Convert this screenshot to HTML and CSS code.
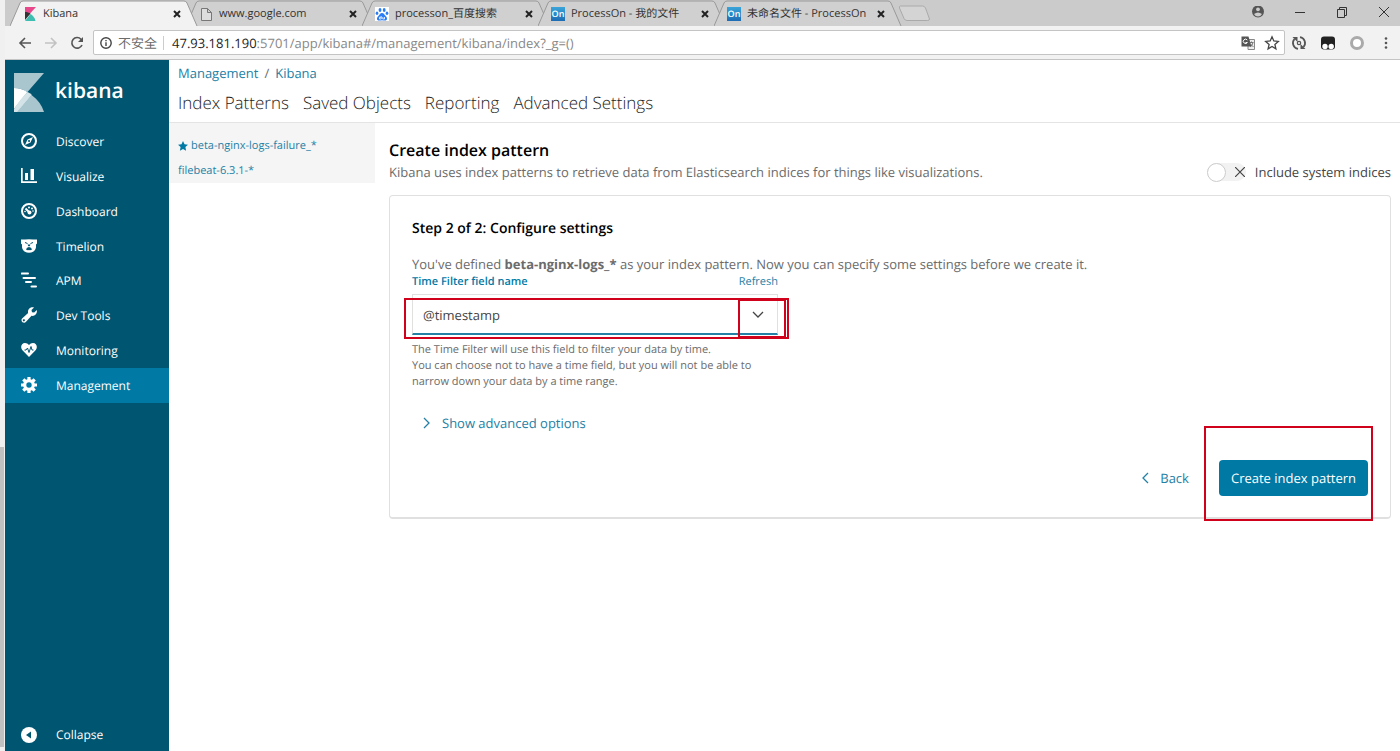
FILE: index.html
```html
<!DOCTYPE html>
<html lang="en">
<head>
<meta charset="utf-8">
<title>Kibana</title>
<link rel="stylesheet" href="styles.css">
</head>
<body>
<div class="edge"><div class="edge-bar"></div></div>
<div class="browser">
  <header class="titlebar">
    <div class="tabs">
      <div class="tab active">
        <svg class="tab-shape" viewBox="0 0 188 26" preserveAspectRatio="none"><path d="M0 26L10 3Q11 1 13 1H174Q176 1 177 3L187 26"/></svg>
        <svg class="favicon" viewBox="0 0 16 16"><path fill="#e8488b" d="M3 1h11L3 13z"/><path fill="#333" d="M3 6c2 0 4 .6 5.500 1.500L3 14z"/><path fill="#3ebeb0" d="M8.500 8C11 9.500 13 12 13.500 15H3z"/></svg>
        <span class="tab-title">Kibana</span>
        <button class="close" aria-label="Close tab"><svg viewBox="0 0 8 8"><path d="M1 1l6 6M7 1L1 7"/></svg></button>
      </div>
      <div class="tab">
        <svg class="tab-shape" viewBox="0 0 188 26" preserveAspectRatio="none"><path d="M0 26L10 3Q11 1 13 1H174Q176 1 177 3L187 26"/></svg>
        <svg class="favicon" viewBox="0 0 16 16"><path fill="#ddd" stroke="#777" d="M3.500 2.500h6l4 4v8h-10zM9.500 2.500v4h4"/></svg>
        <span class="tab-title">www.google.com</span>
        <button class="close" aria-label="Close tab"><svg viewBox="0 0 8 8"><path d="M1 1l6 6M7 1L1 7"/></svg></button>
      </div>
      <div class="tab">
        <svg class="tab-shape" viewBox="0 0 188 26" preserveAspectRatio="none"><path d="M0 26L10 3Q11 1 13 1H174Q176 1 177 3L187 26"/></svg>
        <svg class="favicon" viewBox="0 0 16 16"><path fill="#fff" d="M1 1h14v14H1z"/><g fill="#2b7df5"><ellipse cx="6" cy="4" rx="1.400" ry="2"/><ellipse cx="10.200" cy="4" rx="1.400" ry="2"/><ellipse cx="3" cy="7.300" rx="1.300" ry="1.800"/><ellipse cx="13" cy="7.300" rx="1.300" ry="1.800"/><path d="M8 7c2 0 2.500 2 4 3.500s1.500 4-1 4c-1 0-2-.3-3-.3s-2 .3-3 .3c-2.500 0-2.500-2.500-1-4S6 7 8 7z"/></g><path fill="none" stroke="#fff" stroke-width=".8" d="M7.200 10v3H5.500v-1.700h1.700M8.800 11v2h1.700v-2"/></svg>
        <span class="tab-title">processon_百度搜索</span>
        <button class="close" aria-label="Close tab"><svg viewBox="0 0 8 8"><path d="M1 1l6 6M7 1L1 7"/></svg></button>
      </div>
      <div class="tab">
        <svg class="tab-shape" viewBox="0 0 188 26" preserveAspectRatio="none"><path d="M0 26L10 3Q11 1 13 1H174Q176 1 177 3L187 26"/></svg>
        <span class="favicon on">On</span>
        <span class="tab-title">ProcessOn - 我的文件</span>
        <button class="close" aria-label="Close tab"><svg viewBox="0 0 8 8"><path d="M1 1l6 6M7 1L1 7"/></svg></button>
      </div>
      <div class="tab">
        <svg class="tab-shape" viewBox="0 0 188 26" preserveAspectRatio="none"><path d="M0 26L10 3Q11 1 13 1H174Q176 1 177 3L187 26"/></svg>
        <span class="favicon on">On</span>
        <span class="tab-title">未命名文件 - ProcessOn</span>
        <button class="close" aria-label="Close tab"><svg viewBox="0 0 8 8"><path d="M1 1l6 6M7 1L1 7"/></svg></button>
      </div>
      <button class="new-tab" aria-label="New tab"><svg viewBox="0 0 32 17"><path d="M2.500 1h22q2 0 3 2l4 11q0 1.500-2 1.500H9q-2 0-3-2L1.500 3q-.5-2 1-2z"/></svg></button>
    </div>
    <div class="window-buttons">
      <button aria-label="Profile"><svg viewBox="0 0 14 14"><circle cx="7" cy="5.500" r="6" fill="#555"/><circle cx="7" cy="3.300" r="1.900" fill="#ccc"/><path fill="#ccc" d="M3 8q4-3 8 0-1.500 2.500-4 2.500T3 8z"/></svg></button>
      <button aria-label="Minimize"><svg viewBox="0 0 14 14"><path d="M2 6.500h10"/></svg></button>
      <button aria-label="Restore"><svg viewBox="0 0 14 14"><path d="M2.500 3.500h7v8h-7zM4.500 3.500v-2h7v8h-2"/></svg></button>
      <button aria-label="Close"><svg viewBox="0 0 14 14"><path d="M2 1l10 10M12 1L2 11"/></svg></button>
    </div>
  </header>
  <div class="toolbar">
    <div class="tools">
      <button aria-label="Back"><svg viewBox="0 0 16 16"><path d="M14 8H3M8 3L3 8l5 5"/></svg></button>
      <button class="faded" aria-label="Forward"><svg viewBox="0 0 16 16"><path d="M2 8h11M8 3l5 5-5 5"/></svg></button>
      <button aria-label="Reload"><svg viewBox="0 0 16 16"><path d="M13 10A5.300 5.300 0 1 1 12 4.200L13.300 6"/><path fill="#555" stroke="none" d="M14 2v5H9z"/></svg></button>
    </div>
    <div class="omnibox">
      <svg class="info" viewBox="0 0 14 14"><circle cx="7" cy="7" r="5.200"/><path d="M7 6.300V10M7 4v1.200"/></svg>
      <span class="insecure">不安全</span>
      <span class="url"><b>47.93.181.190</b>:5701/app/kibana#/management/kibana/index?_g=()</span>
      <svg class="box-icon" viewBox="0 0 16 16"><path fill="#eee" stroke="#888" d="M8 4.500h6.500v10H8z"/><path fill="#555" d="M1.500 1.500h7l3 10h-10z"/><path fill="none" stroke="#fff" d="M7.300 5A2.200 2.200 0 1 0 7.400 7.500H5.500"/><path fill="none" stroke="#777" d="M9.500 7.500h4M11.500 6.500v1M13 7.500q-.5 3-3 4.500M10.500 9l3 3"/></svg>
      <svg class="box-icon" viewBox="0 0 16 16"><path fill="none" stroke="#444" stroke-width="1.300" d="M8 1.800l1.800 4.200 4.500.4-3.400 3 1 4.400L8 11.500l-3.900 2.300 1-4.400-3.400-3L6.200 6z"/></svg>
    </div>
    <div class="extensions">
      <svg viewBox="0 0 16 16"><g fill="none" stroke="#555" stroke-width="1.800"><path d="M9 2.100A6 6 0 0 1 12.500 12M7 13.900A6 6 0 0 1 3.500 4"/><circle cx="8" cy="8" r="1.700" stroke-width="1.200"/></g><path fill="#555" d="M1.500 2h5v5zM14.500 14h-5V9z"/></svg>
      <svg viewBox="0 0 16 16"><rect x="1" y="1.500" width="14" height="13" rx="3" fill="#222"/><circle cx="5" cy="11.500" r="2.700" fill="#fff"/><circle cx="11.200" cy="11.500" r="2.700" fill="#fff"/></svg>
      <svg viewBox="0 0 16 16"><circle cx="8" cy="8" r="5.500" fill="#fff" stroke="#aaa" stroke-width="3"/></svg>
      <svg viewBox="0 0 16 16"><g fill="#555"><circle cx="8" cy="3.500" r="1.300"/><circle cx="8" cy="8" r="1.300"/><circle cx="8" cy="12.500" r="1.300"/></g></svg>
    </div>
  </div>
  <div class="app">
    <nav class="sidebar">
      <a class="brand" href="#">
        <svg viewBox="0 0 30 39"><path fill="#a9c6cf" d="M0 0h30L13.500 19Q7 15 0 15z"/><path fill="#fff" d="M0 15q7 0 13.500 4L0 36z"/><path fill="#d3e3e8" d="M13.500 19Q7 25 0 36v3h4L18 22q-2-2-4.500-3z"/><path fill="#a9c6cf" d="M17.500 22Q27 29 30 39H3z"/></svg>
        <span>kibana</span>
      </a>
      <ul class="menu">
        <li><a href="#"><svg viewBox="0 0 16 16"><circle cx="8" cy="8" r="7" fill="none" stroke="#fff" stroke-width="2"/><path fill="#fff" fill-rule="evenodd" d="M12 4L9.500 9.500 4 12l2.500-5.500zM8 7a1 1 0 1 0 .1 0z"/></svg>Discover</a></li>
        <li><a href="#"><svg viewBox="0 0 16 16"><path fill="#fff" d="M0 0h1.700v13.300H16V15H0zM4 5h3v7H4zM9.500 1h3.500v11H9.500z"/></svg>Visualize</a></li>
        <li><a href="#"><svg viewBox="0 0 16 16"><circle cx="8" cy="8" r="7" fill="none" stroke="#fff" stroke-width="2"/><path stroke="#fff" stroke-width="2" d="M4.500 5.500l4 4"/><g fill="#fff"><circle cx="8.500" cy="9.500" r="2"/><circle cx="8" cy="4.500" r="1"/><circle cx="11" cy="5.500" r="1"/><circle cx="12" cy="8" r=".8"/><circle cx="4" cy="8.500" r=".8"/></g></svg>Dashboard</a></li>
        <li><a href="#"><svg viewBox="0 0 16 16"><path fill="#fff" d="M0 1.500h4Q8 .8 12 1.500h4v4l-1 1q.5 5-2.500 7-4.500 2.500-9 0-3-2-2.500-7l-1-1z"/><path fill="none" stroke="#005571" d="M4 4.500L6.500 5.500M12 4.500L9.500 5.500"/><path fill="#005571" d="M6.500 6.500h3L8.700 8.300h-1.400zM5 11.500q.5-2.500 3-2.500t3 2.500q-1.500 1-3 .5-1.500.5-3-.5z"/></svg>Timelion</a></li>
        <li><a href="#"><svg viewBox="0 0 16 16"><path fill="none" stroke="#fff" stroke-width="2" stroke-linecap="round" d="M.8 1.500H7M2.500 6H14M5 10h5M10.500 14.500H15"/></svg>APM</a></li>
        <li><a href="#"><svg viewBox="0 0 16 16"><path fill="#fff" fill-rule="evenodd" d="M13 .5L10.500 3l.5 2.200 2.200.4L15.800 3c.8 3.500-1.800 6.500-5.300 5.800L5 14.800c-1 1.200-2.500 1-3.500.4-1.200-1-1.400-2.700-.4-3.700l6-5.500C6.300 2.500 9.500-.5 13 .5zM2.800 12.300a1 1 0 1 0 .1 0z"/></svg>Dev Tools</a></li>
        <li><a href="#"><svg viewBox="0 0 16 16"><path fill="#fff" d="M8 15L1.200 8C-1 5 .5 1 4 1q2.500 0 4 2 1.500-2 4-2c3.500 0 5 4 2.800 7z"/><path fill="none" stroke="#005571" d="M3.500 8H5l1.500-2L8 10.500l2-6L11 8h1.500"/></svg>Monitoring</a></li>
        <li class="current"><a href="#"><svg viewBox="0 0 16 16"><circle cx="8" cy="8" r="4.300" fill="none" stroke="#fff" stroke-width="3.200"/><path stroke="#fff" stroke-width="3.200" d="M8 0v3M8 13v3M0 8h3M13 8h3M2.300 2.300l2.200 2.200M11.500 11.500l2.200 2.200M13.700 2.300l-2.200 2.200M4.500 11.500l-2.200 2.200"/></svg>Management</a></li>
      </ul>
      <button class="collapse"><svg viewBox="0 0 16 16"><circle cx="8" cy="8" r="8" fill="#fff"/><path fill="#005571" d="M10 4.500v7L5 8z"/></svg>Collapse</button>
    </nav>
    <main class="main">
      <div class="crumbs"><a href="#">Management</a><span>/</span><a href="#">Kibana</a></div>
      <nav class="sections">
        <a href="#">Index Patterns</a><a href="#">Saved Objects</a><a href="#">Reporting</a><a href="#">Advanced Settings</a>
      </nav>
      <div class="columns">
        <aside class="patterns">
          <a href="#"><svg viewBox="0 0 10 10"><path fill="#0079a5" d="M5 0l1.500 3.300 3.500.4-2.600 2.400.7 3.600L5 7.900 1.900 9.700l.7-3.600L0 3.700l3.500-.4z"/></svg>beta-nginx-logs-failure_*</a>
          <a href="#">filebeat-6.3.1-*</a>
        </aside>
        <section class="content">
          <div class="heading">
            <div>
              <h1>Create index pattern</h1>
              <p>Kibana uses index patterns to retrieve data from Elasticsearch indices for things like visualizations.</p>
            </div>
            <label class="switch">
              <span class="switch-track">
                <input type="checkbox">
                <svg viewBox="0 0 10 10"><path d="M0 0l10 10M10 0L0 10"/></svg>
              </span>
              Include system indices
            </label>
          </div>
          <form class="card">
            <h2>Step 2 of 2: Configure settings</h2>
            <p class="intro">You've defined <strong>beta-nginx-logs_*</strong> as your index pattern. Now you can specify some settings before we create it.</p>
            <div class="field">
              <div class="field-head"><label for="time-field">Time Filter field name</label><a href="#">Refresh</a></div>
              <div class="select-wrap">
                <select id="time-field"><option>@timestamp</option></select>
                <svg class="chevron" viewBox="0 0 12 8"><path d="M1 1l5 5 5-5"/></svg>
                <span class="mark mark-field"></span>
                <span class="mark mark-arrow"></span>
              </div>
              <p class="help">The Time Filter will use this field to filter your data by time.<br>You can choose not to have a time field, but you will not be able to narrow down your data by a time range.</p>
            </div>
            <button type="button" class="advanced"><svg viewBox="0 0 8 12"><path d="M1 1l5 5-5 5"/></svg>Show advanced options</button>
            <div class="actions">
              <button type="button" class="back"><svg viewBox="0 0 8 12"><path d="M7 1L2 6l5 5"/></svg>Back</button>
              <div class="submit-wrap">
                <button type="button" class="submit">Create index pattern</button>
                <span class="mark mark-submit"></span>
              </div>
            </div>
          </form>
        </section>
      </div>
    </main>
  </div>
</div>
</body>
</html>
```
FILE: styles.css
```css
* { box-sizing: border-box; }

body {
  margin: 0;
  min-height: 100vh;
  display: flex;
  background: #fff;
  color: #6b6b6b;
  font-family: "Open Sans", "Noto Sans CJK SC", sans-serif;
  font-size: 13px;
  line-height: 20px;
  text-rendering: geometricPrecision;
}

h1, h2, p, ul { margin: 0; padding: 0; }
a { color: #2480a5; text-decoration: none; }
button { padding: 0; border: 0; background: none; color: inherit; font: inherit; text-rendering: inherit; }
svg { display: block; flex: none; }

.edge { display: flex; flex: none; align-items: flex-end; width: 5px; padding-bottom: 4px; background: #f0f0f0; }
.edge-bar { width: 4px; height: 40vh; background: #c1c1c1; }
.browser { display: flex; flex: 1; flex-direction: column; min-width: 0; }

.titlebar { display: flex; justify-content: space-between; height: 26px; background: #cbcbcb; }
.tabs { display: flex; align-items: center; padding-left: 5px; }
.tab {
  position: relative;
  display: flex;
  align-items: center;
  gap: 5px;
  width: 188px;
  height: 26px;
  margin-right: -12px;
  padding: 2px 17px 0 12px;
  color: #333;
  font-size: 11px;
}
.tab > * { position: relative; }
.tab .tab-shape { position: absolute; left: 0; top: 0; width: 100%; height: 100%; fill: #d0d0d0; stroke: #999; }
.tab.active { z-index: 1; }
.tab.active .tab-shape { fill: #f2f2f2; }
.favicon { flex: none; width: 16px; height: 16px; }
.favicon.on { width: 14px; height: 14px; margin: 0 1px; background: linear-gradient(#3aa5d8, #1c6cb4); color: #fff; font-size: 9px; font-weight: 600; line-height: 14px; text-align: center; }
.tab-title { flex: 1; white-space: nowrap; }
.close svg { width: 8px; height: 8px; fill: none; stroke: #222; stroke-width: 2; }
.new-tab { margin-left: 8px; }
.new-tab svg { width: 32px; height: 17px; fill: #d4d4d4; stroke: #aaa; }
.window-buttons { display: flex; gap: 28px; align-items: center; padding-right: 9px; }
.window-buttons svg { width: 14px; height: 14px; fill: none; stroke: #333; }
.window-buttons button:first-child svg { stroke: none; }

.toolbar { display: flex; align-items: center; height: 34px; background: #f2f2f2; border-bottom: 1px solid #c4c4c4; }
.tools { display: flex; gap: 10px; padding: 0 8px 0 12px; }
.tools svg { width: 16px; height: 16px; fill: none; stroke: #555; stroke-width: 1.6; }
.faded { opacity: .3; }
.omnibox { display: flex; flex: 1; align-items: center; height: 25px; padding: 0 4px; background: #fff; border: 1px solid #c4c4c4; border-radius: 2px; }
.info { width: 14px; height: 14px; margin: 0 5px 0 1px; fill: none; stroke: #444; stroke-width: 1.4; }
.insecure { padding-right: 6px; border-right: 1px solid #ccc; line-height: 14px; }
.url { flex: 1; padding-left: 8px; color: #888; }
.url b { color: #222; font-weight: 400; }
.box-icon { width: 16px; height: 16px; margin-left: 8px; }
.extensions { display: flex; gap: 13px; padding: 0 6px; }
.extensions svg { width: 16px; height: 16px; }

.app { display: flex; flex: 1; }
.sidebar { display: flex; flex: none; flex-direction: column; width: 164px; background: #005571; color: #fff; }
.sidebar a { color: #fff; }
.brand { display: flex; align-items: center; gap: 11px; height: 65px; padding-left: 9px; font-size: 21px; font-weight: 600; }
.brand svg { width: 30px; height: 39px; }
.brand span { padding-bottom: 4px; }
.menu { display: flex; flex-direction: column; height: 278px; list-style: none; }
.menu li { display: flex; flex: 1; }
.menu a, .collapse { display: flex; flex: 1; align-items: center; gap: 19px; padding-left: 16px; font-size: 12px; }
.menu svg, .collapse svg { width: 16px; height: 16px; }
.menu svg { margin-bottom: 2px; }
.menu .current { background: #0079a5; }
.collapse { flex: none; height: 32px; margin-top: auto; }

.main { flex: 1; min-width: 0; }
.crumbs { display: flex; gap: 6px; padding: 3px 9px 8px; }
.sections { display: flex; gap: 14px; padding: 0 9px 7px; border-bottom: 1px solid #e4e4e4; font-size: 17px; font-weight: 300; line-height: 24px; }
.sections a { color: #222; }
.columns { display: flex; align-items: flex-start; gap: 14px; padding-right: 9px; }
.patterns { flex: none; width: 206px; padding: 10px 9px 0; background: #f5f5f5; font-size: 11px; line-height: 25px; }
.patterns a { display: flex; align-items: center; gap: 3px; }
.patterns svg { width: 10px; height: 10px; }
.content { flex: 1; min-width: 0; }

.heading { display: flex; justify-content: space-between; align-items: flex-end; padding: 16px 0 13px; }
h1 { color: #000; font-size: 16px; font-weight: 600; line-height: 23px; }
.switch { display: flex; align-items: center; gap: 9px; color: #444; }
.switch-track { display: flex; align-items: center; gap: 9px; width: 39px; height: 18px; background: #f2f2f2; border-radius: 9px; }
.switch input { flex: none; width: 19px; height: 19px; margin: 0; appearance: none; background: #fff; border: 1px solid #ccc; border-radius: 50%; }
.switch svg { width: 10px; height: 10px; stroke: #444; stroke-width: 1.2; }

.card { padding: 22px 22px 21px; border: 1px solid #e0e0e0; border-bottom-width: 2px; border-radius: 4px; }
h2 { margin-bottom: 14px; color: #000; font-size: 14px; font-weight: 600; line-height: 22px; }
.field { width: 366px; font-size: 11px; line-height: 16px; }
.field-head { display: flex; justify-content: space-between; }
.field-head label { color: #0079a5; font-weight: 600; }
.select-wrap { position: relative; margin: 4px 0 7px; }
select {
  display: block;
  width: 100%;
  height: 41px;
  padding: 2px 10px 0;
  appearance: none;
  background: #fff;
  border: 1px solid #e0e0e0;
  border-bottom: 2px solid #2480a5;
  border-radius: 0;
  color: #444;
  font: inherit;
  font-size: 13px;
  text-rendering: inherit;
}
.chevron { position: absolute; right: 14px; top: 17px; width: 12px; height: 8px; fill: none; stroke: #444; stroke-width: 1.3; }
.mark { position: absolute; border: 2px solid #d0021b; pointer-events: none; }
.mark-field { left: -8px; right: -11px; top: 4px; bottom: -4px; }
.mark-arrow { left: 326px; right: -8px; top: 5px; bottom: -3px; }
.advanced { display: flex; align-items: center; gap: 11px; height: 24px; margin: 21px 0 25px 11px; color: #2480a5; }
.advanced svg, .back svg { width: 8px; height: 12px; fill: none; stroke: #2480a5; stroke-width: 1.3; }
.actions { display: flex; justify-content: flex-end; align-items: center; gap: 30px; }
.back { display: flex; align-items: center; gap: 11px; color: #2480a5; }
.submit-wrap { position: relative; }
.submit { height: 36px; padding: 0 12px; background: #0079a5; border-radius: 4px; color: #fff; }
.mark-submit { left: -15px; right: -5px; top: -34px; bottom: -25px; }
```
